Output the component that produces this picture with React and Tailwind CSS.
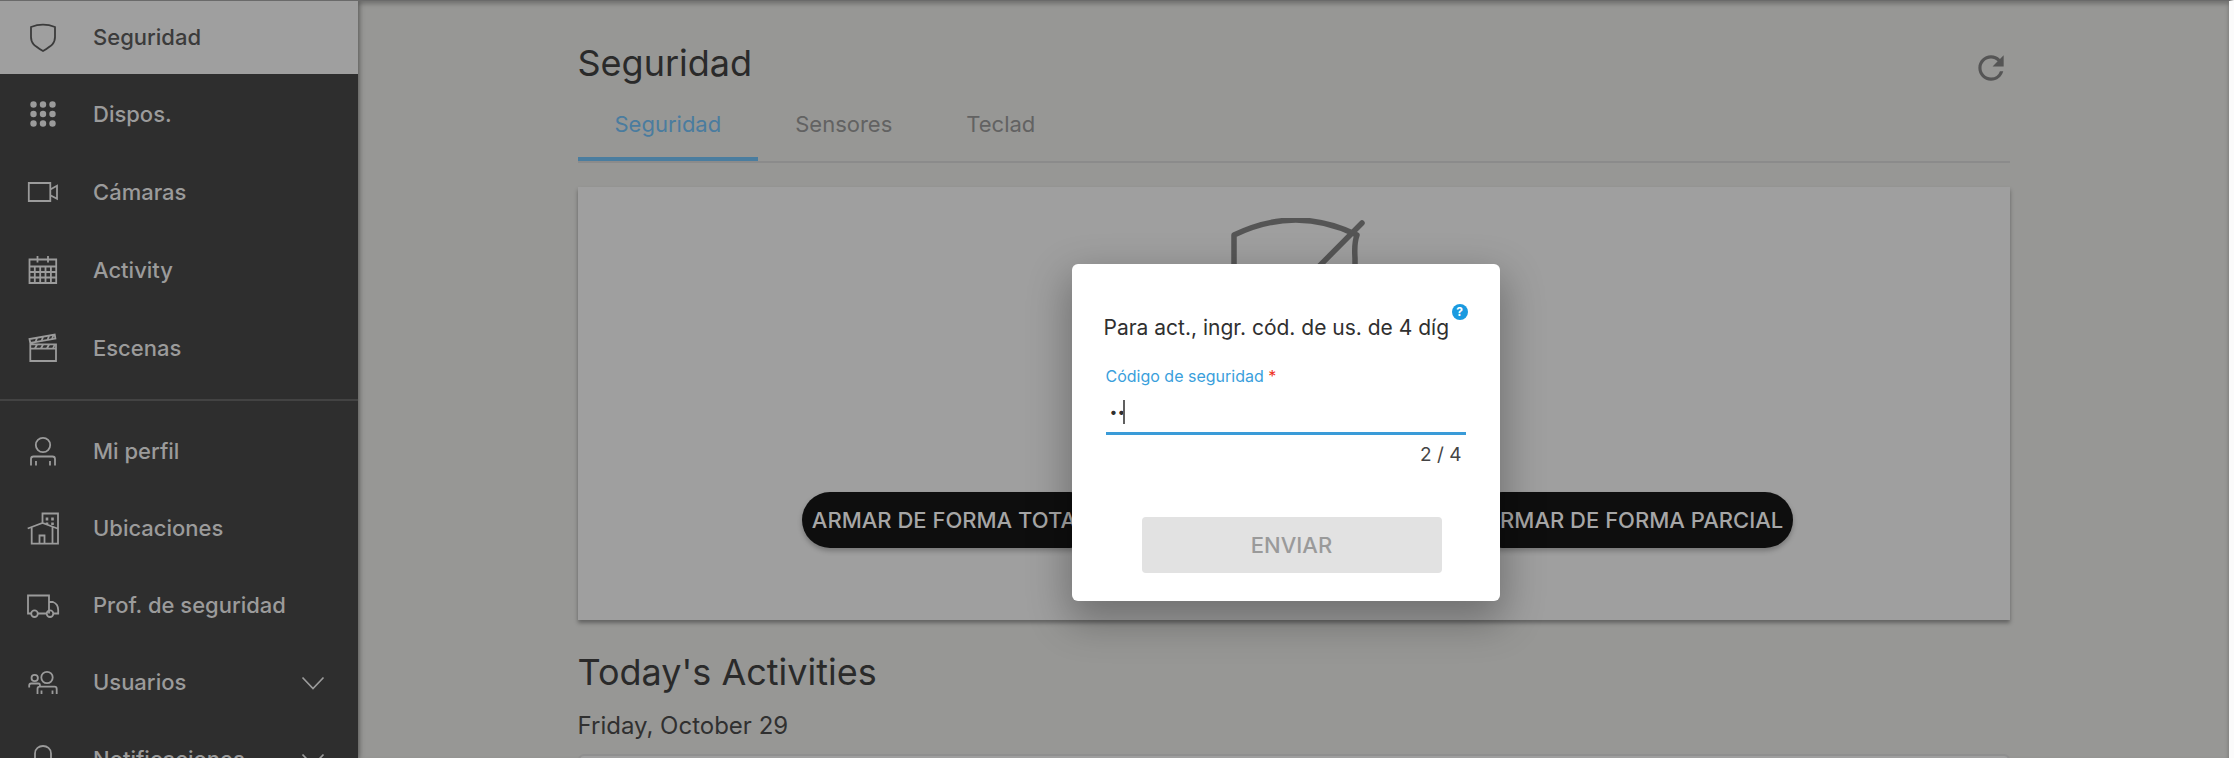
import React, { useState } from "react";
import { MdRefresh } from "react-icons/md";

const iconProps = {
  width: 34,
  height: 34,
  viewBox: "0 0 34 34",
  fill: "none",
  stroke: "currentColor",
  strokeWidth: 1.8,
  "aria-hidden": true,
};

function ShieldIcon() {
  return (
    <svg {...iconProps}>
      <path d="M5 6Q17 1.2 29 6V16C29 22.5 26 24.5 17 30C8 24.5 5 22.5 5 16Z" />
    </svg>
  );
}

function DotsIcon() {
  return (
    <svg {...iconProps} fill="currentColor" stroke="none">
      {[7.5, 17, 26.5].map((y) =>
        [7.5, 17, 26.5].map((x) => <circle key={`${x}-${y}`} cx={x} cy={y} r="3.2" />)
      )}
    </svg>
  );
}

function CameraIcon() {
  return (
    <svg {...iconProps}>
      <path d="M2.8 8H24.3V26H2.8ZM24.3 14.5L31 10.8V23.8L24.3 20.2" />
    </svg>
  );
}

function CalendarIcon() {
  return (
    <svg {...iconProps}>
      <path d="M3.5 6.5H30.2V30H3.5ZM3.5 13.5H30.2M11.5 3V9.5M22 3V9.5" />
      <path d="M3.5 19H30.2M3.5 24.5H30.2M8.8 13.5V30M14.2 13.5V30M19.5 13.5V30M24.9 13.5V30" />
    </svg>
  );
}

function ClapperIcon() {
  return (
    <svg {...iconProps}>
      <path d="M4.3 13.3H30V30H4.3ZM4.3 17.6H30M4.3 12L3.5 8L28.7 3.6L29.4 7.6Z" />
      <path d="M9 17.5L11 13.5M15 17.5L17 13.5M21 17.5L23 13.5M27 17.5L28.5 14M9.5 11L11 7M15.5 10L17 6M21.5 9L23 5M26 8L27.5 4" />
    </svg>
  );
}

function PersonIcon() {
  return (
    <svg {...iconProps}>
      <circle cx="17" cy="10" r="7.2" />
      <path d="M5 30.5V24Q5 21.5 7.5 21.5H26.5Q29 21.5 29 24V30.5M10 26V30.5M24 26V30.5" />
    </svg>
  );
}

function PlacesIcon() {
  return (
    <svg {...iconProps}>
      <path d="M1.7 16.5L16.5 11L31.5 16.5M5.7 15.5V31.7H32V1.5H16.5V11M26.5 15V31.7M13.5 31.7V23.5H18.5V31.7" />
      <path d="M21 5.5V8.5M26.5 5.5V8.5M21 10.5V12.5M26.5 10.5V13" strokeWidth="2.6" />
    </svg>
  );
}

function TruckIcon() {
  return (
    <svg {...iconProps}>
      <path d="M5 24.5H2V6.5H23V24.5M23 13H27Q32.2 15 32.2 21V24.5H28M20.5 24.5H12" />
      <circle cx="8.5" cy="24.7" r="3.3" />
      <circle cx="24" cy="24.7" r="3.3" />
    </svg>
  );
}

function UsersIcon() {
  return (
    <svg {...iconProps}>
      <circle cx="21" cy="11.5" r="5.7" />
      <circle cx="8.7" cy="12" r="3.2" />
      <path d="M11.5 28V23Q11.5 20.7 13.7 20.7H28.5Q30.7 20.7 30.7 23V28M15.5 24.5V28M26.5 24.5V28M3.2 21.5V19.5Q3.2 17.5 5.2 17.5H12.5Q14 17.5 14 20" />
    </svg>
  );
}

function BellIcon() {
  return (
    <svg {...iconProps}>
      <path d="M4 27Q9 23 9 16V10.5C9 0.5 25 0.5 25 10.5V16Q25 23 30 27ZM13 27Q13 31 17 31Q21 31 21 27" />
    </svg>
  );
}

function ChevronIcon() {
  return (
    <svg
      width="24"
      height="14"
      viewBox="0 0 24 14"
      fill="none"
      stroke="currentColor"
      strokeWidth="1.7"
      aria-hidden="true"
    >
      <path d="M1.5 1.5L12 12.5L22.5 1.5" />
    </svg>
  );
}

function DisarmedShield() {
  return (
    <svg width="136" height="156" viewBox="0 0 136 156" fill="none" aria-hidden="true">
      <path
        d="M4 17Q66 -13 127 17Q124 25 125 40V72C125 112 94 134 66 150C37 134 4 112 4 72ZM132 5L12 126"
        stroke="#555555"
        strokeWidth="5.5"
        strokeLinecap="round"
        strokeLinejoin="round"
      />
    </svg>
  );
}

const mainItems = [
  { label: "Dispos.", icon: DotsIcon },
  { label: "Cámaras", icon: CameraIcon },
  { label: "Activity", icon: CalendarIcon },
  { label: "Escenas", icon: ClapperIcon },
];

const accountItems = [
  { label: "Mi perfil", icon: PersonIcon },
  { label: "Ubicaciones", icon: PlacesIcon },
  { label: "Prof. de seguridad", icon: TruckIcon },
  { label: "Usuarios", icon: UsersIcon, expandable: true },
  { label: "Notificaciones", icon: BellIcon, expandable: true },
];

const tabs = ["Seguridad", "Sensores", "Teclad"];

function NavItem({ item, className }) {
  const Icon = item.icon;
  return (
    <a href="#" className={`flex shrink-0 items-center pl-[26px] pr-[33px] ${className}`}>
      <Icon />
      <span className="ml-[33px] flex-1">{item.label}</span>
      {item.expandable && <ChevronIcon />}
    </a>
  );
}

function Sidebar() {
  return (
    <nav className="z-10 flex w-[358px] shrink-0 flex-col bg-[#2e2e2e] text-[22px] font-medium text-[#9b9b9b] shadow-[2px_0_5px_rgba(0,0,0,0.25)]">
      <NavItem
        item={{ label: "Seguridad", icon: ShieldIcon }}
        className="h-[73px] bg-[#9f9f9f] text-[#3b3b3b]"
      />
      <div className="pt-px">
        {mainItems.map((item) => (
          <NavItem key={item.label} item={item} className="h-[78px]" />
        ))}
      </div>
      <hr className="my-3 border-t-2 border-[#434343]" />
      {accountItems.map((item) => (
        <NavItem key={item.label} item={item} className="h-[77px]" />
      ))}
    </nav>
  );
}

function CodeDialog() {
  const [code, setCode] = useState("12");
  return (
    <div className="absolute inset-0 z-20 flex items-start justify-center pt-[263px] pr-4">
      <form
        role="dialog"
        aria-labelledby="code-title"
        onSubmit={(e) => e.preventDefault()}
        className="w-[428px] rounded-md bg-white px-8 pt-10 pb-7 shadow-[0_16px_40px_4px_rgba(0,0,0,0.3)]"
      >
        <div className="flex justify-between">
          <h2
            id="code-title"
            className="pt-2 text-[21px] leading-8 whitespace-nowrap text-[#303030]"
          >
            Para act., ingr. cód. de us. de 4 díg
          </h2>
          <button
            type="button"
            aria-label="Ayuda"
            className="flex size-4 shrink-0 items-center justify-center rounded-full bg-[#1a9ae0] text-xs font-bold text-white"
          >
            ?
          </button>
        </div>
        <div className="px-0.5">
          <label htmlFor="code" className="mt-5 block text-base leading-6 text-[#3a9fdc]">
            Código de seguridad <span className="text-[#ee3124]">*</span>
          </label>
          <div className="relative mt-1 flex h-[43px] items-center border-b-[3px] border-[#3a9bd8]">
            <input
              id="code"
              type="password"
              maxLength={4}
              value={code}
              onChange={(e) => setCode(e.target.value)}
              className="w-full pl-1 text-sm text-[#303030] caret-transparent outline-none"
            />
            {/* caret, taller than the dots */}
            <span className="absolute left-[17px] h-6 w-0.5 bg-[#606060]" />
          </div>
          <p className="mt-1 pr-1 text-right text-[19px] leading-8 text-[#444444]">
            {code.length} / 4
          </p>
        </div>
        <button
          type="submit"
          disabled
          className="mt-[46px] mr-[26px] ml-auto block h-14 w-[300px] rounded bg-[#e2e2e2] text-[22px] font-medium text-[#9a9a9a]"
        >
          ENVIAR
        </button>
      </form>
    </div>
  );
}

export default function App() {
  const [activeTab, setActiveTab] = useState("Seguridad");
  return (
    <div className="flex h-screen overflow-hidden border-t border-r-[5px] border-t-[#6a6a6a] border-r-[#fbfbfb] bg-[#979795] font-['Inter',sans-serif]">
      <Sidebar />
      <main className="relative min-w-0 flex-1 px-8 shadow-[inset_0_3px_4px_rgba(0,0,0,0.25)]">
        <div className="mx-auto max-w-[1432px]">
          <header className="flex items-start justify-between pt-[38px]">
            <h1 className="text-4xl leading-[48px] text-[#2a2a2a]">Seguridad</h1>
            <button type="button" aria-label="Actualizar" className="pt-2.5 text-[#555555]">
              <MdRefresh size={38} />
            </button>
          </header>

          <div role="tablist" className="mt-3 flex h-[64px] border-b-2 border-[#8b8b8b] text-[22px]">
            {tabs.map((tab) => (
              <button
                key={tab}
                type="button"
                role="tab"
                aria-selected={tab === activeTab}
                onClick={() => setActiveTab(tab)}
                className={
                  tab === activeTab
                    ? "border-b-4 border-[#4a7d9f] px-[37px] pb-2 text-[#4a7c9f]"
                    : "border-b-4 border-transparent px-[37px] pb-2 text-[#626262]"
                }
              >
                {tab}
              </button>
            ))}
          </div>

          <section className="mt-6 flex h-[433px] flex-col items-center justify-between bg-[#9f9f9f] pt-[31px] pb-[72px] pl-2 shadow-[0_3px_4px_rgba(0,0,0,0.35)]">
            <DisarmedShield />
            <div className="flex gap-[376px] text-[22px] font-medium text-[#a6a6a6]">
              <button
                type="button"
                className="h-14 rounded-full bg-[#0e0e0e] px-2.5 shadow-[0_3px_5px_rgba(0,0,0,0.25)]"
              >
                ARMAR DE FORMA TOTAL
              </button>
              <button
                type="button"
                className="h-14 rounded-full bg-[#0e0e0e] px-2.5 shadow-[0_3px_5px_rgba(0,0,0,0.25)]"
              >
                ARMAR DE FORMA PARCIAL
              </button>
            </div>
          </section>

          <h2 className="mt-7 text-4xl leading-[48px] text-[#2a2a2a]">Today's Activities</h2>
          <p className="mt-3.5 text-2xl text-[#303030]">Friday, October 29</p>
          <section className="mt-3 h-40 rounded-md border-2 border-[#8f8f8f] bg-[#9f9f9f]" />
        </div>
        <CodeDialog />
      </main>
    </div>
  );
}
